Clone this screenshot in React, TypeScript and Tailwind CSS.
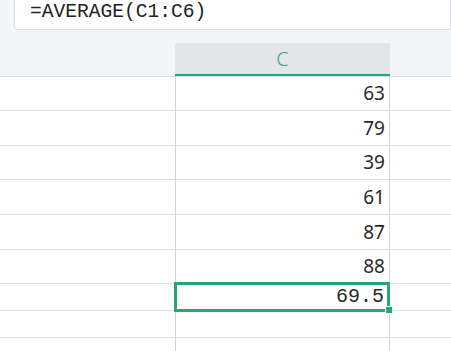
import React from "react";

const rows: { v: string; h: string }[] = [
  { v: "63", h: "h-[34px]" },
  { v: "79", h: "h-[35px]" },
  { v: "39", h: "h-[34px]" },
  { v: "61", h: "h-[35px]" },
  { v: "87", h: "h-[35px]" },
  { v: "88", h: "h-[34px]" },
];

export default function App() {
  return (
    <div className="w-[451px] h-[351px] overflow-hidden bg-[#f4f5f7] flex flex-col">
      {/* formula bar */}
      <div className="h-[31px] pl-[14px] shrink-0">
        <div className="h-[31px] -mt-px bg-white border border-[#dcdde0] rounded-bl-[4px] flex items-center pl-[15px] pb-[3px]">
          <span className="text-[19.6px] leading-none text-[#222] font-['Liberation_Mono',monospace]">
            =AVERAGE(C1:C6)
          </span>
        </div>
      </div>
      <div className="h-[12px] shrink-0" />
      {/* header row */}
      <div className="flex h-[34px] shrink-0 border-b border-[#dcdde1]">
        <div className="w-[175px] shrink-0" />
        <div className="w-[215px] shrink-0 bg-[#e4e5e8] border-b-2 border-[#23a870] flex items-center justify-center rounded-t-[2px]">
          <span className="text-[20px] leading-none font-light text-[#3aa878] font-['Noto_Sans',sans-serif]">
            C
          </span>
        </div>
        <div className="flex-1" />
      </div>
      {/* data rows */}
      <div className="flex-1 bg-white flex flex-col">
        {rows.map((r, i) => (
          <div key={i} className={`flex ${r.h} shrink-0 border-b border-[#e0e1e5]`}>
            <div className="w-[175px] shrink-0" />
            <div className="w-[215px] shrink-0 border-x border-[#d5d6da] flex items-center justify-end pr-[4px]">
              <span className="text-[19px] leading-none text-[#2a2a2a] font-['Noto_Sans',sans-serif]">
                {r.v}
              </span>
            </div>
            <div className="flex-1" />
          </div>
        ))}
        <div className="flex h-[27px] shrink-0 border-b border-[#e0e1e5] relative">
          <div className="w-[175px] shrink-0" />
          <div className="w-[215px] shrink-0 border-x border-[#d5d6da] flex items-center justify-end pr-[5px]">
            <span className="text-[20px] leading-none text-[#2a2a2a] font-['Liberation_Mono',monospace]">
              69.5
            </span>
          </div>
          <div className="flex-1" />
          <div className="absolute left-[174px] top-[-2px] w-[216px] h-[30px] border-[3px] border-[#23a870]" />
          <div className="absolute left-[385px] top-[22px] w-[6px] h-[6px] bg-[#23a870] border border-white box-content" />
        </div>
        <div className="flex h-[27px] shrink-0 border-b border-[#e0e1e5]">
          <div className="w-[175px] shrink-0" />
          <div className="w-[215px] shrink-0 border-x border-[#d5d6da]" />
          <div className="flex-1" />
        </div>
        <div className="flex flex-1">
          <div className="w-[175px] shrink-0" />
          <div className="w-[215px] shrink-0 border-x border-[#d5d6da]" />
          <div className="flex-1" />
        </div>
      </div>
    </div>
  );
}
